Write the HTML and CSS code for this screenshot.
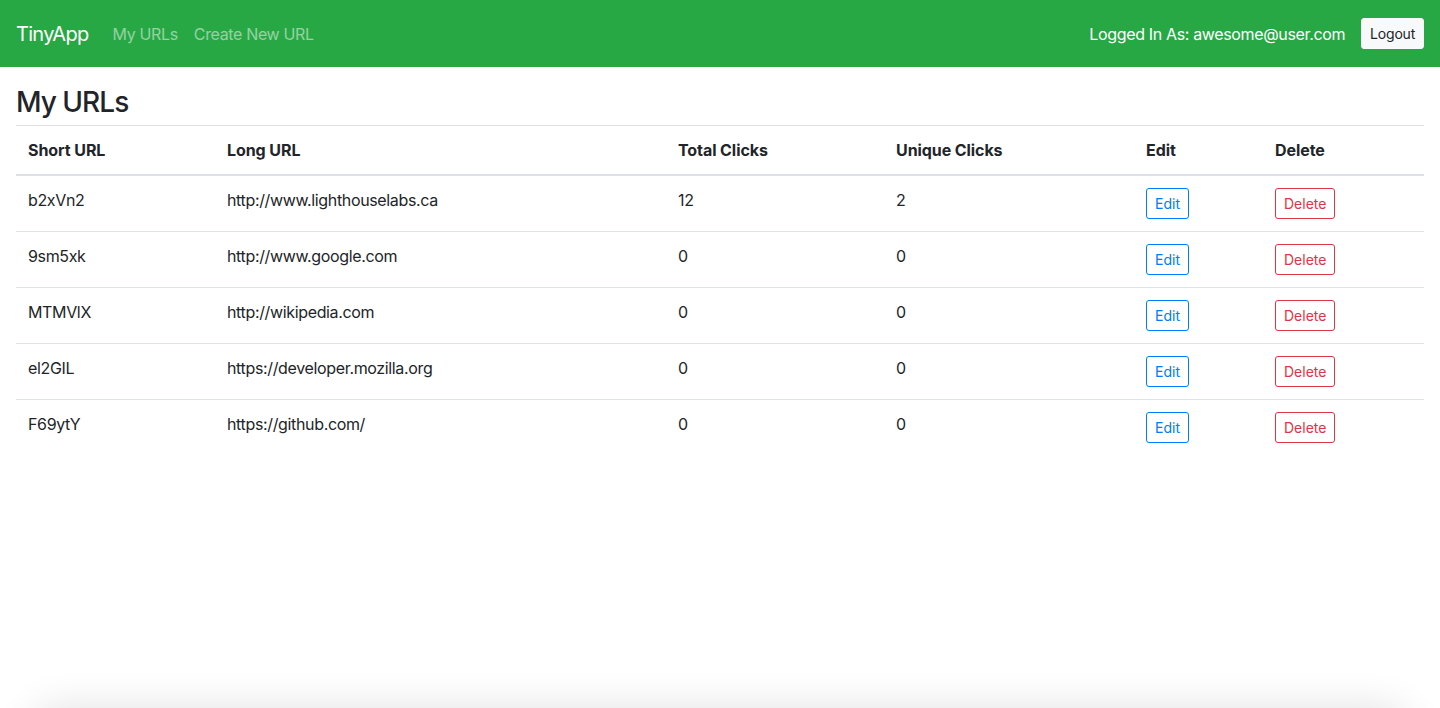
FILE: index.html
```html
<!DOCTYPE html>
<html>
<head>
  <title>TinyApp</title>
  <meta name="viewport" content="width=device-width, initial-scale=1.0">
  <link rel="stylesheet" href="styles.css">
</head>
<body>
  <nav class="navbar">
    <a class="brand" href="/urls">TinyApp</a>
    <div class="nav-links">
      <a class="nav-link" href="/urls">My URLs</a>
      <a class="nav-link" href="/urls/new">Create New URL</a>
    </div>
    <div class="nav-user">
      <span class="user-text">Logged In As: awesome@user.com</span>
      <form class="logout-form" action="/logout" method="POST">
        <button class="btn btn-light" type="submit">Logout</button>
      </form>
    </div>
  </nav>

  <main class="content">
    <h3 class="page-title">My URLs</h3>
    <table class="url-table">
      <thead>
        <tr>
          <th class="col-short">Short URL</th>
          <th class="col-long">Long URL</th>
          <th class="col-total">Total Clicks</th>
          <th class="col-unique">Unique Clicks</th>
          <th class="col-edit">Edit</th>
          <th class="col-delete">Delete</th>
        </tr>
      </thead>
      <tbody>
        <tr>
          <td>b2xVn2</td>
          <td>http://www.lighthouselabs.ca</td>
          <td>12</td>
          <td>2</td>
          <td><a class="btn btn-outline-primary" href="/urls/b2xVn2">Edit</a></td>
          <td><button class="btn btn-outline-danger">Delete</button></td>
        </tr>
        <tr>
          <td>9sm5xk</td>
          <td>http://www.google.com</td>
          <td>0</td>
          <td>0</td>
          <td><a class="btn btn-outline-primary" href="/urls/9sm5xk">Edit</a></td>
          <td><button class="btn btn-outline-danger">Delete</button></td>
        </tr>
        <tr>
          <td>MTMVlX</td>
          <td>http://wikipedia.com</td>
          <td>0</td>
          <td>0</td>
          <td><a class="btn btn-outline-primary" href="/urls/MTMVlX">Edit</a></td>
          <td><button class="btn btn-outline-danger">Delete</button></td>
        </tr>
        <tr>
          <td>el2GIL</td>
          <td>https://developer.mozilla.org</td>
          <td>0</td>
          <td>0</td>
          <td><a class="btn btn-outline-primary" href="/urls/el2GIL">Edit</a></td>
          <td><button class="btn btn-outline-danger">Delete</button></td>
        </tr>
        <tr>
          <td>F69ytY</td>
          <td>https://github.com/</td>
          <td>0</td>
          <td>0</td>
          <td><a class="btn btn-outline-primary" href="/urls/F69ytY">Edit</a></td>
          <td><button class="btn btn-outline-danger">Delete</button></td>
        </tr>
      </tbody>
    </table>
  </main>

  <div class="bottom-shade"></div>
</body>
</html>
```

FILE: styles.css
```css
body {
  font-family: Inter, "Noto Sans", "Liberation Sans", Arial, sans-serif;
  font-size: 16px;
  line-height: 1.5;
  letter-spacing: -0.022em;
  color: #212529;
  background-color: #ffffff;
  margin: 0;
  padding: 0;
}

a {
  text-decoration: none;
}

/* Navbar */
.navbar {
  display: flex;
  align-items: center;
  height: 67px;
  box-sizing: border-box;
  padding: 0 16px;
  background-color: #28a745;
}

.brand {
  font-size: 20px;
  line-height: 30px;
  letter-spacing: -0.035em;
  color: #ffffff;
  margin-right: 16px;
}

.nav-links {
  display: flex;
}

.nav-link {
  padding: 8px;
  color: rgba(255, 255, 255, 0.5);
}

.nav-user {
  margin-left: auto;
  display: flex;
  align-items: center;
}

.user-text {
  color: #ffffff;
  margin-right: 16px;
}

.logout-form {
  margin: 0;
}

/* Buttons */
.btn {
  display: inline-block;
  font-family: inherit;
  font-size: 14px;
  line-height: 21px;
  letter-spacing: 0;
  padding: 4px 8px;
  border: 1px solid transparent;
  border-radius: 3px;
  background: transparent;
  cursor: pointer;
}

.btn-light {
  background-color: #f8f9fa;
  border-color: #f8f9fa;
  color: #212529;
  letter-spacing: -0.015em;
}

.btn-outline-primary {
  color: #007bff;
  border-color: #007bff;
}

.btn-outline-danger {
  color: #dc3545;
  border-color: #dc3545;
}

/* Content */
.content {
  padding: 16px;
}

.page-title {
  font-size: 28px;
  font-weight: 500;
  line-height: 1.2;
  letter-spacing: -0.035em;
  margin: 3px 0 5px;
}

.url-table {
  width: 100%;
  border-collapse: collapse;
}

.url-table th,
.url-table td {
  padding: 12px;
  text-align: left;
  vertical-align: top;
  border-top: 1px solid #dee2e6;
}

.url-table th {
  font-weight: 700;
  letter-spacing: -0.005em;
  border-bottom: 2px solid #dee2e6;
}

.col-short { width: 175px; }
.col-long { width: 427px; }
.col-total { width: 194px; }
.col-unique { width: 226px; }
.col-edit { width: 105px; }

/* window shade at bottom edge */
.bottom-shade {
  position: fixed;
  left: 30px;
  right: 30px;
  bottom: -60px;
  height: 60px;
  border-radius: 30px;
  box-shadow: 0 0 40px rgba(0, 0, 0, 0.12);
  pointer-events: none;
}
```
